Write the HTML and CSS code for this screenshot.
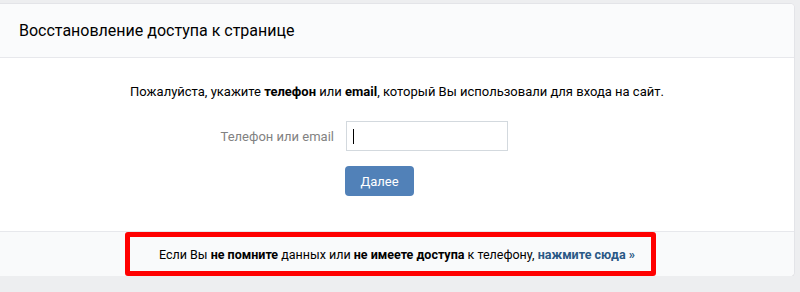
FILE: index.html
```html
<!DOCTYPE html>
<html lang="ru">
<head>
    <meta charset="UTF-8">
    <title>Восстановление доступа к странице</title>
    <link rel="stylesheet" href="styles.css">
</head>
<body>

<div class="page">
    <section class="card">
        <header class="card-head">
            <h1>Восстановление доступа к странице</h1>
        </header>

        <div class="card-body">
            <p class="hint">Пожалуйста, укажите <b>телефон</b> или <b>email</b>, который Вы использовали для входа на сайт.</p>
            <form class="restore-form" onsubmit="return false">
                <label for="login">Телефон или email</label>
                <span class="field-wrap">
                    <input type="text" id="login" class="field">
                    <i class="caret"></i>
                </span>
                <button type="submit" class="btn">Далее</button>
            </form>
        </div>

        <footer class="card-foot">
            Если Вы <b>не помните</b> данных или <b>не имеете доступа</b> к телефону, <a href="#">нажмите сюда&nbsp;»</a>
            <div class="highlight"></div>
        </footer>
    </section>
</div>

</body>
</html>
```

FILE: styles.css
```css
body {
    font-family: Roboto, "Liberation Sans", sans-serif;
    font-size: 13px;
    background: #edeef0;
    color: #000;
    margin: 0;
    padding: 0;
}
.page {
    padding-top: 4px;
}
.card {
    width: 794px;
    background: #fff;
    border-radius: 0 4px 4px 0;
    box-shadow: 0 1px 0 0 #d7d8db, 0 0 0 1px #e3e4e8;
    overflow: hidden;
}
.card-head {
    height: 53px;
    background: #fafbfc;
    border-bottom: 1px solid #e7e8ec;
    display: flex;
    align-items: center;
    padding-left: 19px;
}
.card-head h1 {
    margin: 0;
    font-size: 16px;
    font-weight: normal;
    color: #000;
}
.card-body {
    padding: 25px 0 35px;
}
.hint {
    margin: 0;
    line-height: 18px;
    text-align: center;
}
.restore-form {
    display: grid;
    grid-template-columns: 334px 162px;
    column-gap: 12px;
    row-gap: 15px;
    margin-top: 20px;
    align-items: center;
}
.restore-form label {
    justify-self: end;
    color: #828282;
}
.field-wrap {
    position: relative;
    display: block;
    height: 30px;
}
.field {
    box-sizing: border-box;
    width: 162px;
    height: 30px;
    border: 1px solid #d3d9de;
    border-radius: 0;
    padding: 0 8px;
    font: inherit;
    outline: none;
}
.caret {
    position: absolute;
    left: 7px;
    top: 8px;
    width: 1px;
    height: 15px;
    background: #000;
}
.btn {
    grid-column: 2;
    justify-self: start;
    margin-left: -1px;
    width: 69px;
    height: 30px;
    background: #5181b8;
    color: #fff;
    border: none;
    border-radius: 4px;
    font: inherit;
    cursor: pointer;
}
.card-foot {
    position: relative;
    height: 44px;
    line-height: 46px;
    font-size: 12.5px;
    background: #f9fafb;
    border-top: 1px solid #e7e8ec;
    text-align: center;
}
.card-foot a {
    color: #2a5885;
    font-weight: bold;
    text-decoration: none;
}
.highlight {
    position: absolute;
    left: 125px;
    top: 0;
    width: 531px;
    height: 44px;
    box-sizing: border-box;
    border: 5px solid #ff0000;
    border-radius: 3px;
}
```
